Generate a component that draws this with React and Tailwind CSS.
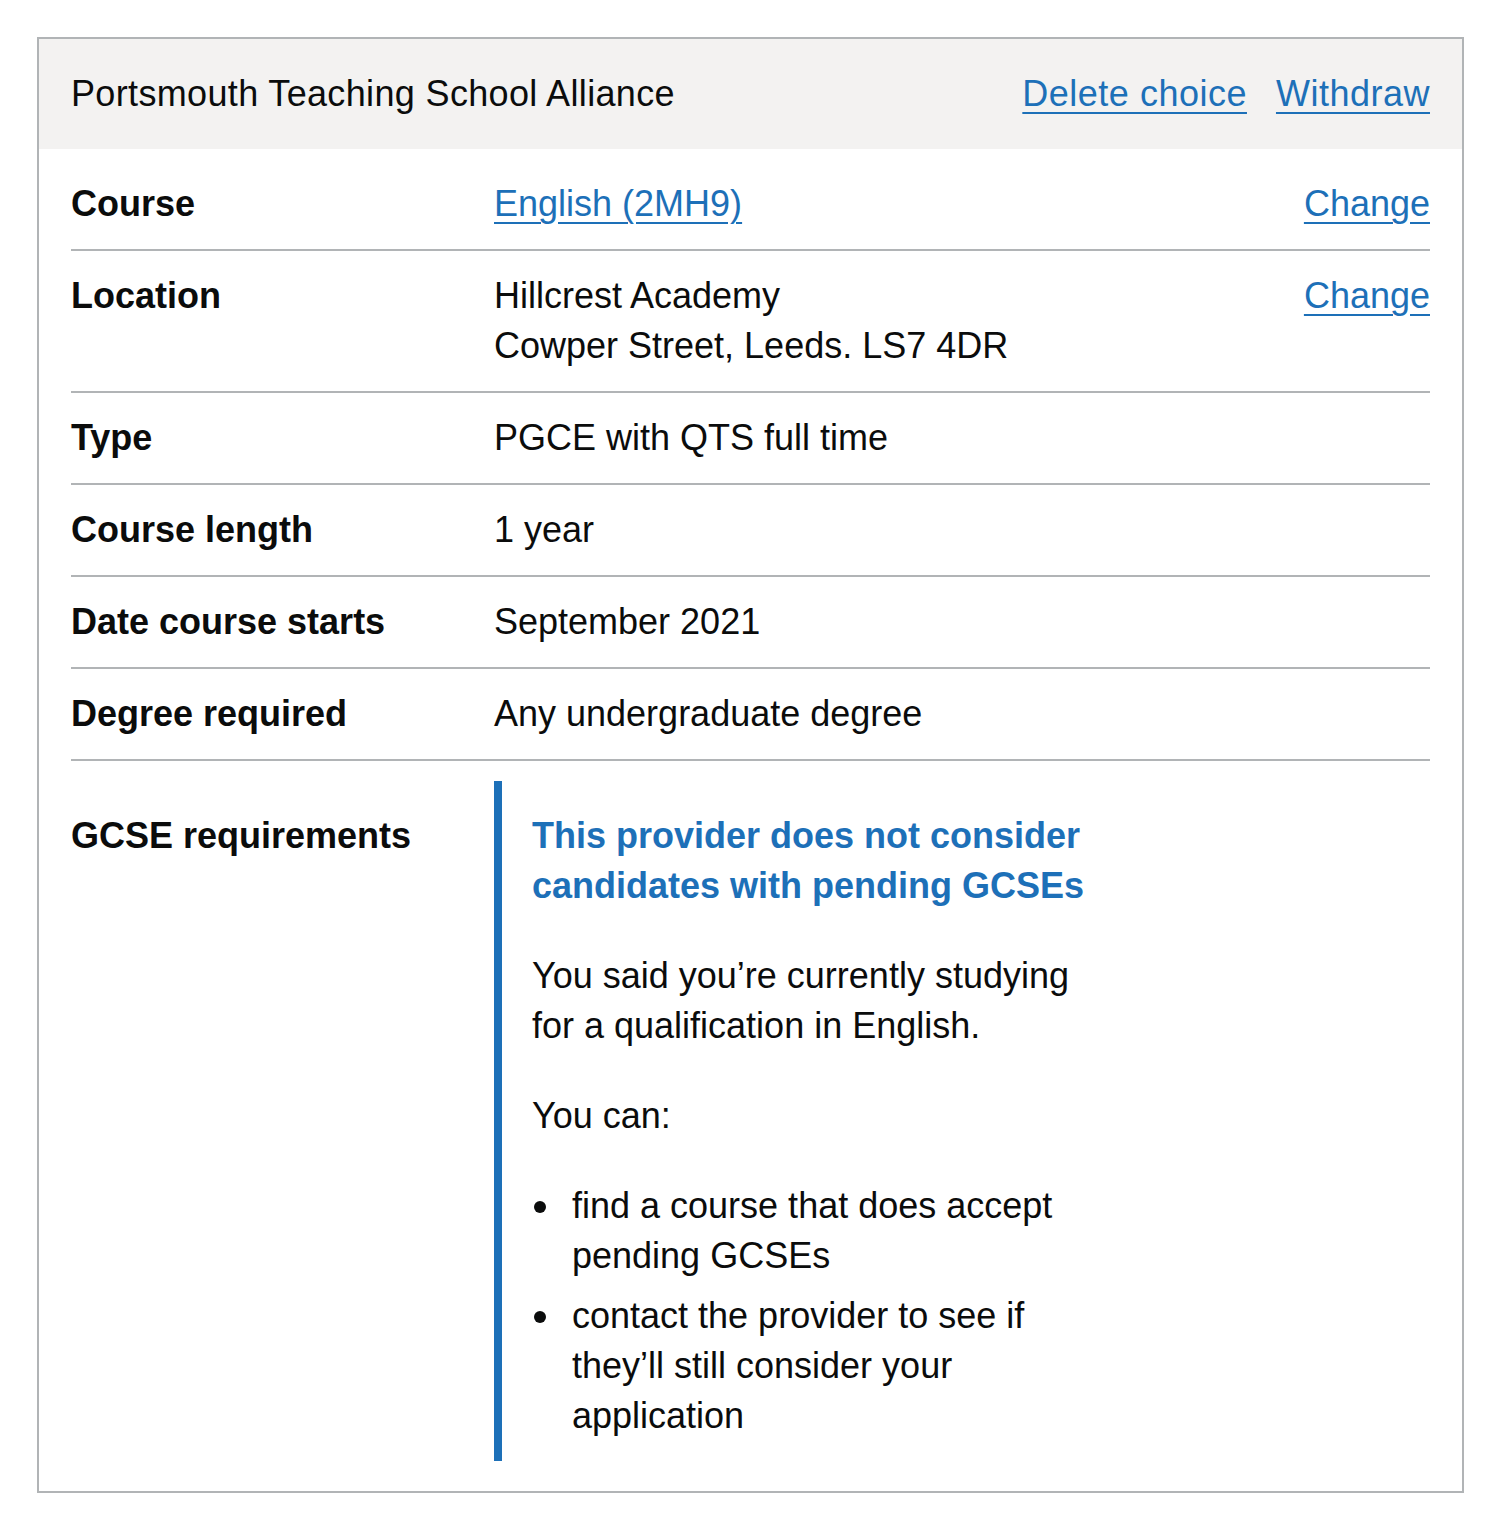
import React from "react";

const linkCls =
  "text-[#1d70b8] underline decoration-2 underline-offset-[6px]";

function Row({ label, children, action, last, keyCls = "" }) {
  return (
    <div
      className={`grid grid-cols-[423px_1fr_auto] py-[20px] ${
        last ? "" : "border-b-2 border-[#b1b4b6]"
      }`}
    >
      <div className={`font-bold ${keyCls}`}>{label}</div>
      <div>{children}</div>
      <div className="text-right">
        {action ? (
          <a href="#" className={linkCls}>
            {action}
          </a>
        ) : null}
      </div>
    </div>
  );
}

function Bullet({ children, className = "" }) {
  return (
    <li className={`flex ${className}`}>
      <span className="w-[40px] shrink-0 pt-[20px] pl-[2px]">
        <span className="block h-[12px] w-[12px] rounded-full bg-[#0b0c0c]" />
      </span>
      <span>{children}</span>
    </li>
  );
}

export default function App() {
  return (
    <div className="bg-white min-h-[1524px] pt-[37px] pl-[37px] font-[family-name:'Liberation_Sans',Arial,sans-serif] text-[36px] leading-[50px] text-[#0b0c0c]">
      <div className="w-[1427px] border-2 border-[#b1b4b6]">
        <div className="flex items-center justify-between bg-[#f3f2f1] px-[32px] py-[30px]">
          <div className="tracking-[0.35px]">Portsmouth Teaching School Alliance</div>
          <div className="flex gap-[29px] tracking-[0.5px]">
            <a href="#" className={linkCls}>
              Delete choice
            </a>
            <a href="#" className={linkCls}>
              Withdraw
            </a>
          </div>
        </div>
        <div className="px-[32px] py-[10px]">
          <Row label="Course" action="Change">
            <a href="#" className={linkCls}>
              English (2MH9)
            </a>
          </Row>
          <Row label="Location" action="Change">
            Hillcrest Academy
            <br />
            Cowper Street, Leeds. LS7 4DR
          </Row>
          <Row label="Type">PGCE with QTS full time</Row>
          <Row label="Course length">1 year</Row>
          <Row label="Date course starts">September 2021</Row>
          <Row label="Degree required">Any undergraduate degree</Row>
          <Row label="GCSE requirements" last keyCls="pt-[30px]">
            <div className="border-l-[8px] border-[#1d70b8] pl-[30px] pt-[30px] pb-[20px]">
              <p className="font-bold text-[#1d70b8] mb-[40px]">
                This provider does not consider
                <br />
                candidates with pending GCSEs
              </p>
              <p className="mb-[40px]">
                You said you’re currently studying
                <br />
                for a qualification in English.
              </p>
              <p className="mb-[40px]">You can:</p>
              <ul>
                <Bullet className="mb-[10px]">
                  find a course that does accept
                  <br />
                  pending GCSEs
                </Bullet>
                <Bullet>
                  contact the provider to see if
                  <br />
                  they’ll still consider your
                  <br />
                  application
                </Bullet>
              </ul>
            </div>
          </Row>
        </div>
      </div>
    </div>
  );
}
